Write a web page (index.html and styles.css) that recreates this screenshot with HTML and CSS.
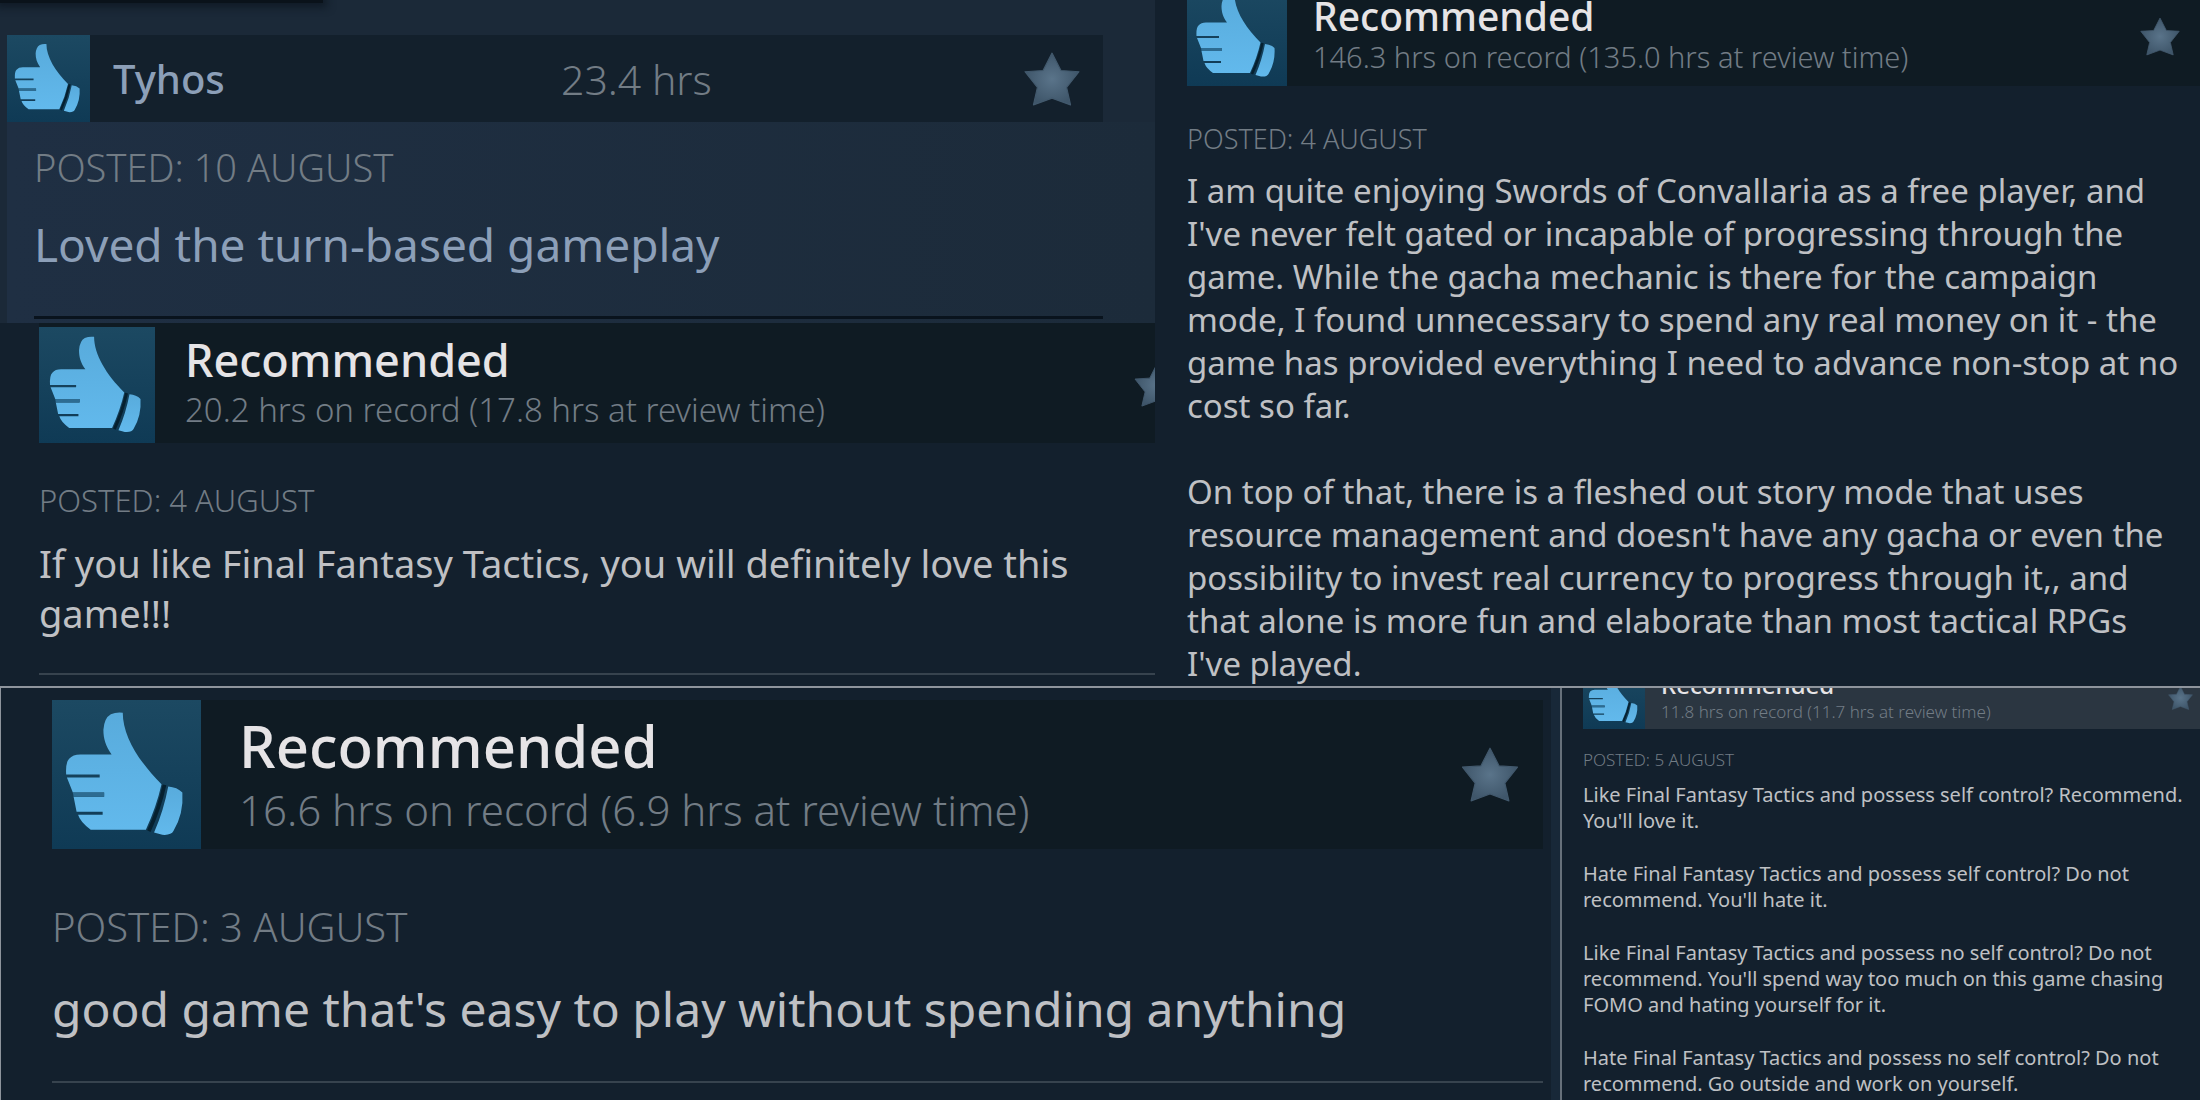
FILE: index.html
```html
<!DOCTYPE html>
<html lang="en">

<head>
    <meta charset="UTF-8">
    <meta name="viewport" content="width=device-width, initial-scale=1.0">
    <title>Player reviews</title>

    <link rel="stylesheet" href="styles.css">
</head>

<body>
    <!-- shared icons -->
    <svg class="sprite" aria-hidden="true">
        <defs>
            <linearGradient id="hand" x1="0" y1="0" x2="0" y2="1">
                <stop offset="0" stop-color="#58abdc" />
                <stop offset="1" stop-color="#62b9ec" />
            </linearGradient>
            <radialGradient id="metal">
                <stop offset="0" stop-color="#5a748a" />
                <stop offset="1" stop-color="#3f566a" />
            </radialGradient>
        </defs>
        <symbol id="thumb" viewBox="0 0 100 100">
            <path fill="url(#hand)" d="M39.500 9.500Q43 8 47.500 8.500C47.500 24 58 41 73.500 56.500Q70 72 63 87L26 87Q19 82 17.500 77L34 77L34 75L16.500 75L14.500 65L35 65L35 62L14 62L10 52L32 52L32 50L9.500 50Q9 42 11.500 39.500Q14 36.500 19 36.500L40 36.500C36 31 34.500 26 34.500 20Q35 12 39.500 9.500Z" />
            <path fill="#2d6c92" d="M14 62H35V65H14.500Z" />
            <path fill="none" stroke="#06202f" stroke-width="2.500" d="M75.500 57Q72 73 65 88" />
            <path fill="url(#hand)" d="M78 58Q84 58.500 87.500 62Q88.500 76 81.500 88Q80 91 74 90.500L68.500 89Q75 74 78 58Z" />
        </symbol>
        <symbol id="star" viewBox="0 0 100 96">
            <path fill="url(#metal)" stroke="#42596d" stroke-width="2" stroke-linejoin="round" d="M50 2L66 33L98 35L76 63L83 94L50 82L17 94L24 63L2 35L34 33Z" />
        </symbol>
    </svg>

    <main>
        <div class="row row-top">
            <div class="stack">
                <article class="review tyhos">
                    <div class="tab"></div>
                    <header>
                        <svg class="thumb"><use href="#thumb" /></svg>
                        <h2>Tyhos</h2>
                        <span class="hours">23.4 hrs</span>
                        <svg class="star"><use href="#star" /></svg>
                    </header>
                    <div class="content">
                        <p class="posted">POSTED: 10 AUGUST</p>
                        <p>Loved the turn-based gameplay</p>
                        <hr>
                    </div>
                </article>

                <article class="review tactics">
                    <header>
                        <svg class="thumb"><use href="#thumb" /></svg>
                        <div class="title">
                            <h2>Recommended</h2>
                            <span class="hours">20.2 hrs on record (17.8 hrs at review time)</span>
                        </div>
                        <svg class="star"><use href="#star" /></svg>
                    </header>
                    <p class="posted">POSTED: 4 AUGUST</p>
                    <p>If you like Final Fantasy Tactics, you will definitely love this<br>game!!!</p>
                    <hr>
                </article>
            </div>

            <article class="review convallaria">
                <header>
                    <svg class="thumb"><use href="#thumb" /></svg>
                    <div class="title">
                        <h2>Recommended</h2>
                        <span class="hours">146.3 hrs on record (135.0 hrs at review time)</span>
                    </div>
                    <svg class="star"><use href="#star" /></svg>
                </header>
                <p class="posted">POSTED: 4 AUGUST</p>
                <p>I am quite enjoying Swords of Convallaria as a free player, and<br>
                    I've never felt gated or incapable of progressing through the<br>
                    game. While the gacha mechanic is there for the campaign<br>
                    mode, I found unnecessary to spend any real money on it - the<br>
                    game has provided everything I need to advance non-stop at no<br>
                    cost so far.</p>
                <p>On top of that, there is a fleshed out story mode that uses<br>
                    resource management and doesn't have any gacha or even the<br>
                    possibility to invest real currency to progress through it,, and<br>
                    that alone is more fun and elaborate than most tactical RPGs<br>
                    I've played.</p>
            </article>
        </div>

        <div class="row row-bottom">
            <article class="review easy">
                <header>
                    <svg class="thumb"><use href="#thumb" /></svg>
                    <div class="title">
                        <h2>Recommended</h2>
                        <span class="hours">16.6 hrs on record (6.9 hrs at review time)</span>
                    </div>
                    <svg class="star"><use href="#star" /></svg>
                </header>
                <p class="posted">POSTED: 3 AUGUST</p>
                <p>good game that's easy to play without spending anything</p>
                <hr>
            </article>

            <article class="review control">
                <header>
                    <svg class="thumb"><use href="#thumb" /></svg>
                    <div class="title">
                        <h2>Recommended</h2>
                        <span class="hours">11.8 hrs on record (11.7 hrs at review time)</span>
                    </div>
                    <svg class="star"><use href="#star" /></svg>
                </header>
                <p class="posted">POSTED: 5 AUGUST</p>
                <p>Like Final Fantasy Tactics and possess self control? Recommend.<br>
                    You'll love it.</p>
                <p>Hate Final Fantasy Tactics and possess self control? Do not<br>
                    recommend. You'll hate it.</p>
                <p>Like Final Fantasy Tactics and possess no self control? Do not<br>
                    recommend. You'll spend way too much on this game chasing<br>
                    FOMO and hating yourself for it.</p>
                <p>Hate Final Fantasy Tactics and possess no self control? Do not<br>
                    recommend. Go outside and work on yourself.</p>
            </article>
        </div>
    </main>
</body>

</html>
```
FILE: styles.css
```css
:root {
    --bg: #13202d;
    --bar: #0f1b23;
    --text: #bfc0c4;
    --muted: #727c85;
    --line: #8e949c;
}

* {
    box-sizing: border-box;
}

body {
    margin: 0;
    background: var(--bg);
    color: var(--text);
    font-family: "Noto Sans", "Open Sans", sans-serif;
    overflow: hidden;
}

h2,
p {
    margin: 0;
    font-weight: 400;
    white-space: nowrap;
}

hr {
    margin: 0;
    border: 0;
    height: 2px;
    background: #37434e;
}

.sprite {
    position: absolute;
    width: 0;
    height: 0;
}

.row {
    display: grid;
}

.row-top {
    grid-template-columns: 21fr 19fr;
}

.row-bottom {
    grid-template-columns: 39fr 16fr;
    min-height: 414px;
    border-top: 2px solid var(--line);
}

.stack {
    min-width: 0;
}

/* REVIEW */
.review {
    min-width: 0;
    overflow: hidden;
}

.review header {
    display: flex;
    align-items: center;
    background: var(--bar);
}

.title {
    display: flex;
    flex-direction: column;
    align-self: flex-start;
}

.title h2 {
    color: #e6e4e6;
    font-weight: 500;
}

.hours,
.posted {
    color: var(--muted);
    font-weight: 300;
}

.thumb {
    flex: none;
    background: linear-gradient(#1c4962, #0f3a55);
}

.star {
    flex: none;
    margin-left: auto;
}

/* Tyhos */
.tyhos {
    background: #1b2938;
    color: #8c9fb8;
}

.tab {
    width: 28%;
    height: 3px;
    background: #0a121a;
    box-shadow: 0 0 8px 4px #0f1924;
}

.tyhos header {
    margin: 32px 52px 0 7px;
    background: #13202c;
}

.tyhos .thumb {
    width: 83px;
    height: 87px;
}

.tyhos h2 {
    width: 471px;
    padding-left: 23px;
    font-size: 40px;
    font-weight: 500;
    line-height: 58px;
}

.tyhos .hours {
    font-size: 41px;
    line-height: 58px;
}

.tyhos .star {
    width: 58px;
    height: 54px;
    margin-right: 22px;
}

.tyhos .content {
    margin-left: 7px;
    padding: 23px 52px 4px 27px;
    background: linear-gradient(90deg, #1f2f43, #1c2b3a);
}

.tyhos p {
    font-size: 46px;
    line-height: 60px;
}

.tyhos .posted {
    margin-bottom: 25px;
    font-size: 38px;
    line-height: 44px;
}

.tyhos hr {
    height: 3px;
    margin-top: 42px;
    background: #09131d;
}

/* Final Fantasy Tactics */
.tactics {
    padding: 4px 0 11px 39px;
    background: linear-gradient(var(--bar), var(--bar)) 39px 0 / 100% 4px no-repeat;
}

.tactics header {
    height: 116px;
}

.tactics .thumb {
    width: 116px;
    height: 116px;
}

.tactics .title {
    padding: 3px 0 0 30px;
}

.tactics h2 {
    font-size: 45px;
    line-height: 60px;
}

.tactics .hours {
    font-size: 33px;
    line-height: 40px;
}

.tactics .star {
    width: 46px;
    height: 44px;
    margin-right: -25px;
}

.tactics p {
    font-size: 38px;
    line-height: 50px;
}

.tactics .posted {
    margin: 37px 0 18px;
    font-size: 31px;
    line-height: 40px;
}

.tactics hr {
    margin-top: 35px;
}

/* Convallaria, header runs off the top edge */
.convallaria {
    padding-left: 32px;
}

.convallaria header {
    height: 100px;
    margin-top: -14px;
}

.convallaria .thumb {
    width: 100px;
    height: 100px;
}

.convallaria .title {
    padding: 5px 0 0 26px;
}

.convallaria h2 {
    font-size: 39px;
    line-height: 50px;
}

.convallaria .hours {
    font-size: 29px;
    line-height: 32px;
}

.convallaria .star {
    width: 40px;
    height: 39px;
    margin-right: 20px;
}

.convallaria p {
    margin-bottom: 43px;
    font-size: 33px;
    line-height: 43px;
}

.convallaria .posted {
    margin: 35px 0 12px;
    font-size: 27px;
    line-height: 36px;
}

.convallaria p:last-child {
    margin-bottom: 0;
}

/* easy to play */
.easy {
    padding: 12px 8px 0 51px;
    border-left: 1px solid var(--line);
    border-right: 9px solid #182838;
}

.easy header {
    height: 149px;
}

.easy .thumb {
    width: 149px;
    height: 149px;
}

.easy .title {
    padding: 8px 0 0 38px;
}

.easy h2 {
    font-size: 58px;
    line-height: 76px;
}

.easy .hours {
    font-size: 42px;
    line-height: 52px;
}

.easy .star {
    width: 58px;
    height: 55px;
    margin-right: 24px;
}

.easy p {
    font-size: 48px;
    line-height: 64px;
}

.easy .posted {
    margin: 52px 0 24px;
    font-size: 40px;
    line-height: 52px;
}

.easy hr {
    margin-top: 40px;
}

/* self control, header runs under the row above */
.control {
    padding-left: 21px;
    border-left: 2px solid #67717b;
}

.control header {
    height: 62px;
    margin-top: -21px;
    background: #2b3641;
}

.control .thumb {
    width: 62px;
    height: 62px;
}

.control .title {
    padding: 3px 0 0 16px;
}

.control h2 {
    font-size: 24px;
    line-height: 30px;
}

.control .hours {
    font-size: 17px;
    line-height: 24px;
}

.control .star {
    width: 25px;
    height: 24px;
    margin-right: 7px;
}

.control p {
    margin-bottom: 27px;
    font-size: 20px;
    line-height: 26px;
}

.control .posted {
    margin: 20px 0 11px;
    font-size: 17px;
    line-height: 22px;
}

.control p:last-child {
    margin-bottom: 0;
}
```
